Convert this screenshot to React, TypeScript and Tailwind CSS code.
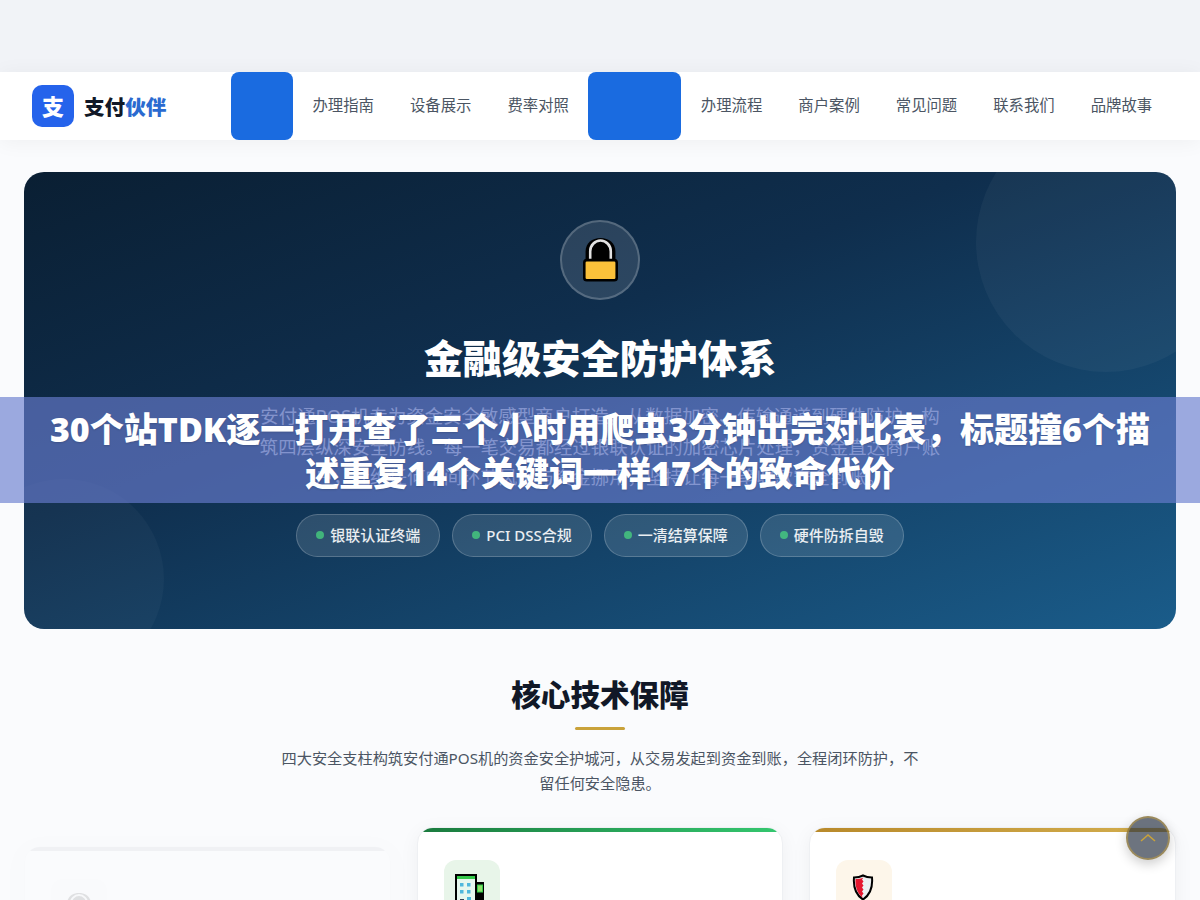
const sans = "font-['Noto_Sans','Noto_Sans_CJK_SC',sans-serif]";

const navLeft = ["办理指南", "设备展示", "费率对照"];
const navRight = ["办理流程", "商户案例", "常见问题", "联系我们", "品牌故事"];
const badges = ["银联认证终端", "PCI DSS合规", "一清结算保障", "硬件防拆自毁"];

function NavGroup({ items }: { items: string[] }) {
  return (
    <nav className="flex gap-9 px-[19.5px]">
      {items.map((n) => (
        <a key={n} className="text-[15.36px] leading-[66px] text-[#4b5563] whitespace-nowrap">{n}</a>
      ))}
    </nav>
  );
}

function LockIcon({ size = 35 }: { size?: number }) {
  return (
    <svg width={size} height={(size * 42) / 34} viewBox="0 0 34 42" fill="none">
      <path d="M2.500 23V13C2.500 5 9 0 17 0s14.500 5 14.500 13V23z" fill="#000" />
      <path d="M7 22V13a10 10.500 0 0 1 20 0V22" stroke="#e2e2e2" strokeWidth="2.500" />
      <rect x="1.250" y="21.500" width="31.500" height="19.500" rx="2.500" fill="#fbc13a" stroke="#000" strokeWidth="2.500" />
    </svg>
  );
}

function BuildingIcon() {
  return (
    <svg width="30" height="46" viewBox="0 0 30 46" className="-ml-[3px]">
      <rect x="1" y="1" width="20" height="45" fill="#e6f7ee" stroke="#000" strokeWidth="2" />
      <rect x="2" y="2" width="18" height="3" fill="#35c94b" />
      <g fill="#4fb8dd">
        <rect x="5" y="9" width="3.500" height="3.500" />
        <rect x="12" y="9" width="3.500" height="3.500" />
        <rect x="5" y="16" width="3.500" height="3.500" />
        <rect x="12" y="16" width="3.500" height="3.500" />
        <rect x="12" y="23" width="4" height="12" />
      </g>
      <rect x="5" y="25" width="4" height="3" fill="#334155" />
      <rect x="21" y="8" width="8" height="38" fill="#000" />
      <rect x="22.500" y="11" width="5" height="7" fill="#8ee06a" stroke="#35c94b" />
    </svg>
  );
}

function ShieldIcon() {
  return (
    <svg width="22" height="27" viewBox="0 0 22 27" className="-ml-[2px]">
      <path d="M11 1.500c3 1.600 6 2 9 2 .8 9-1.500 17-9 22-7.500-5-9.800-13-9-22 3 0 6-.4 9-2z" fill="#eceff1" stroke="#000" strokeWidth="2" />
      <path d="M3.500 5c2.800 0 5.500-.4 8-1.500l-1.500 2 1.500 2-1.500 2 1.500 2-1.500 2 1.500 2-1.500 2 1.500 2-1.500 2 .5 2.500C5.500 19 3 13 3.500 5z" fill="#e5172f" />
    </svg>
  );
}

function Card({ top, iconBg, children, faded }: { top: string; iconBg: string; children: React.ReactNode; faded?: boolean }) {
  return (
    <div className={`relative h-[200px] flex-1 overflow-hidden rounded-2xl border border-[#eef0f3] bg-white pl-[26px] pt-[32px] shadow-[0_4px_20px_rgba(0,0,0,0.05)] ${faded ? "mt-[19px] opacity-[0.1]" : ""}`}>
      <div className={`absolute inset-x-0 top-0 h-[4px] ${top}`} />
      <div className={`flex h-14 w-14 items-start justify-center rounded-xl pt-[14px] ${iconBg}`}>{children}</div>
    </div>
  );
}

export default function App() {
  return (
    <div className={`relative h-[900px] overflow-hidden bg-[#fafbfd] ${sans}`}>
      <div className="h-[72px] bg-[#f1f3f7]" />
      <header className="flex h-[68px] items-center bg-white pl-8 shadow-[0_2px_20px_rgba(0,0,0,0.05)]">
        <div className="flex w-[199px] items-center gap-[10px]">
          <div className="flex h-[42px] w-[42px] items-center justify-center rounded-[10px] bg-[#2563eb] text-[22px] font-extrabold text-white">支</div>
          <span className="mt-[3px] text-[20.6px] font-extrabold text-[#111827]">支付<span className="text-[#2a6ad0]">伙伴</span></span>
        </div>
        <div className="h-[68px] w-[62px] rounded-lg bg-[#1a6be0]" />
        <NavGroup items={navLeft} />
        <div className="h-[68px] w-[93px] rounded-lg bg-[#1a6be0]" />
        <NavGroup items={navRight} />
      </header>

      <main className="px-6 pt-8">
        <section className="relative flex h-[457px] flex-col items-center overflow-hidden rounded-[20px] bg-[linear-gradient(160deg,#0a1f33_0%,#0f2e4d_40%,#1a5c8a_100%)] pt-12 text-center">
          <div className="absolute -right-[60px] -top-[60px] h-[260px] w-[260px] rounded-full bg-white/[0.04]" />
          <div className="absolute -bottom-[50px] -left-[60px] h-[200px] w-[200px] rounded-full bg-white/[0.03]" />
          <div className="flex h-20 w-20 items-center justify-center rounded-full border-2 border-white/20 bg-white/[0.12]">
            <LockIcon />
          </div>
          <h1 className="mt-[30px] text-[39.2px] font-extrabold leading-[56px] text-white">金融级安全防护体系</h1>
          <p className="mt-[15px] w-[690px] text-[18.4px] leading-[30.5px] text-white/70">
            安付通POS机专为资金安全敏感型商户打造，从数据加密、传输通道到硬件防护，构筑四层纵深安全防线。每一笔交易都经过银联认证的加密芯片处理，资金直达商户账户，杜绝任何中间环节风险与资金挪用，坚持让每一笔收款安全到账。
          </p>
          <div className="mt-[21px] flex gap-3">
            {badges.map((b) => (
              <span key={b} className="flex h-[43px] items-center gap-[6px] rounded-full border border-white/20 bg-white/[0.12] px-[19px] text-[15px] font-medium text-white/90 whitespace-nowrap">
                <i className="h-2 w-2 rounded-full bg-[#4ade80]/70" />
                {b}
              </span>
            ))}
          </div>
        </section>

        <section className="flex flex-col items-center pt-[44px]">
          <h2 className="text-[29.6px] font-extrabold leading-[44px] text-[#111827]">核心技术保障</h2>
          <div className="mt-[10px] h-[3px] w-[50px] rounded bg-[#c9a23a]" />
          <p className="mt-4 w-[640px] text-center text-[15.2px] leading-[25px] text-[#4b5563]">
            四大安全支柱构筑安付通POS机的资金安全护城河，从交易发起到资金到账，全程闭环防护，不留任何安全隐患。
          </p>
          <div className="mt-[31px] flex w-full gap-[26px]">
            <Card faded top="bg-[#9ca3af]" iconBg="bg-gray-100"><LockIcon size={28} /></Card>
            <Card top="bg-[linear-gradient(90deg,#1a7a3e,#34c76f)]" iconBg="bg-[#e8f5e9]"><BuildingIcon /></Card>
            <Card top="bg-[linear-gradient(90deg,#b8892a,#d4af4f)]" iconBg="bg-[#fdf6ea]"><ShieldIcon /></Card>
          </div>
        </section>
      </main>

      <div className="absolute inset-x-0 top-[397px] flex h-[106px] items-center justify-center bg-[rgba(104,124,208,0.65)] px-12 pt-[2px]">
        <div className="text-center text-[34px] font-black leading-[44px] text-white [text-shadow:0_1px_2px_rgba(0,0,0,0.15)]">
          30个站TDK逐一打开查了三个小时用爬虫3分钟出完对比表，标题撞6个描述重复14个关键词一样17个的致命代价
        </div>
      </div>

      <button className="absolute left-[1126px] top-[816px] flex h-11 w-11 items-center justify-center rounded-full border-2 border-[#c9a23a]/50 bg-[#1e293b]/65 shadow-[0_4px_12px_rgba(0,0,0,0.2)]">
        <svg width="18" height="18" viewBox="0 0 18 18" fill="none" stroke="#c9a23a" strokeWidth="1.6"><path d="M2 12l7-6 7 6" /></svg>
      </button>
    </div>
  );
}
